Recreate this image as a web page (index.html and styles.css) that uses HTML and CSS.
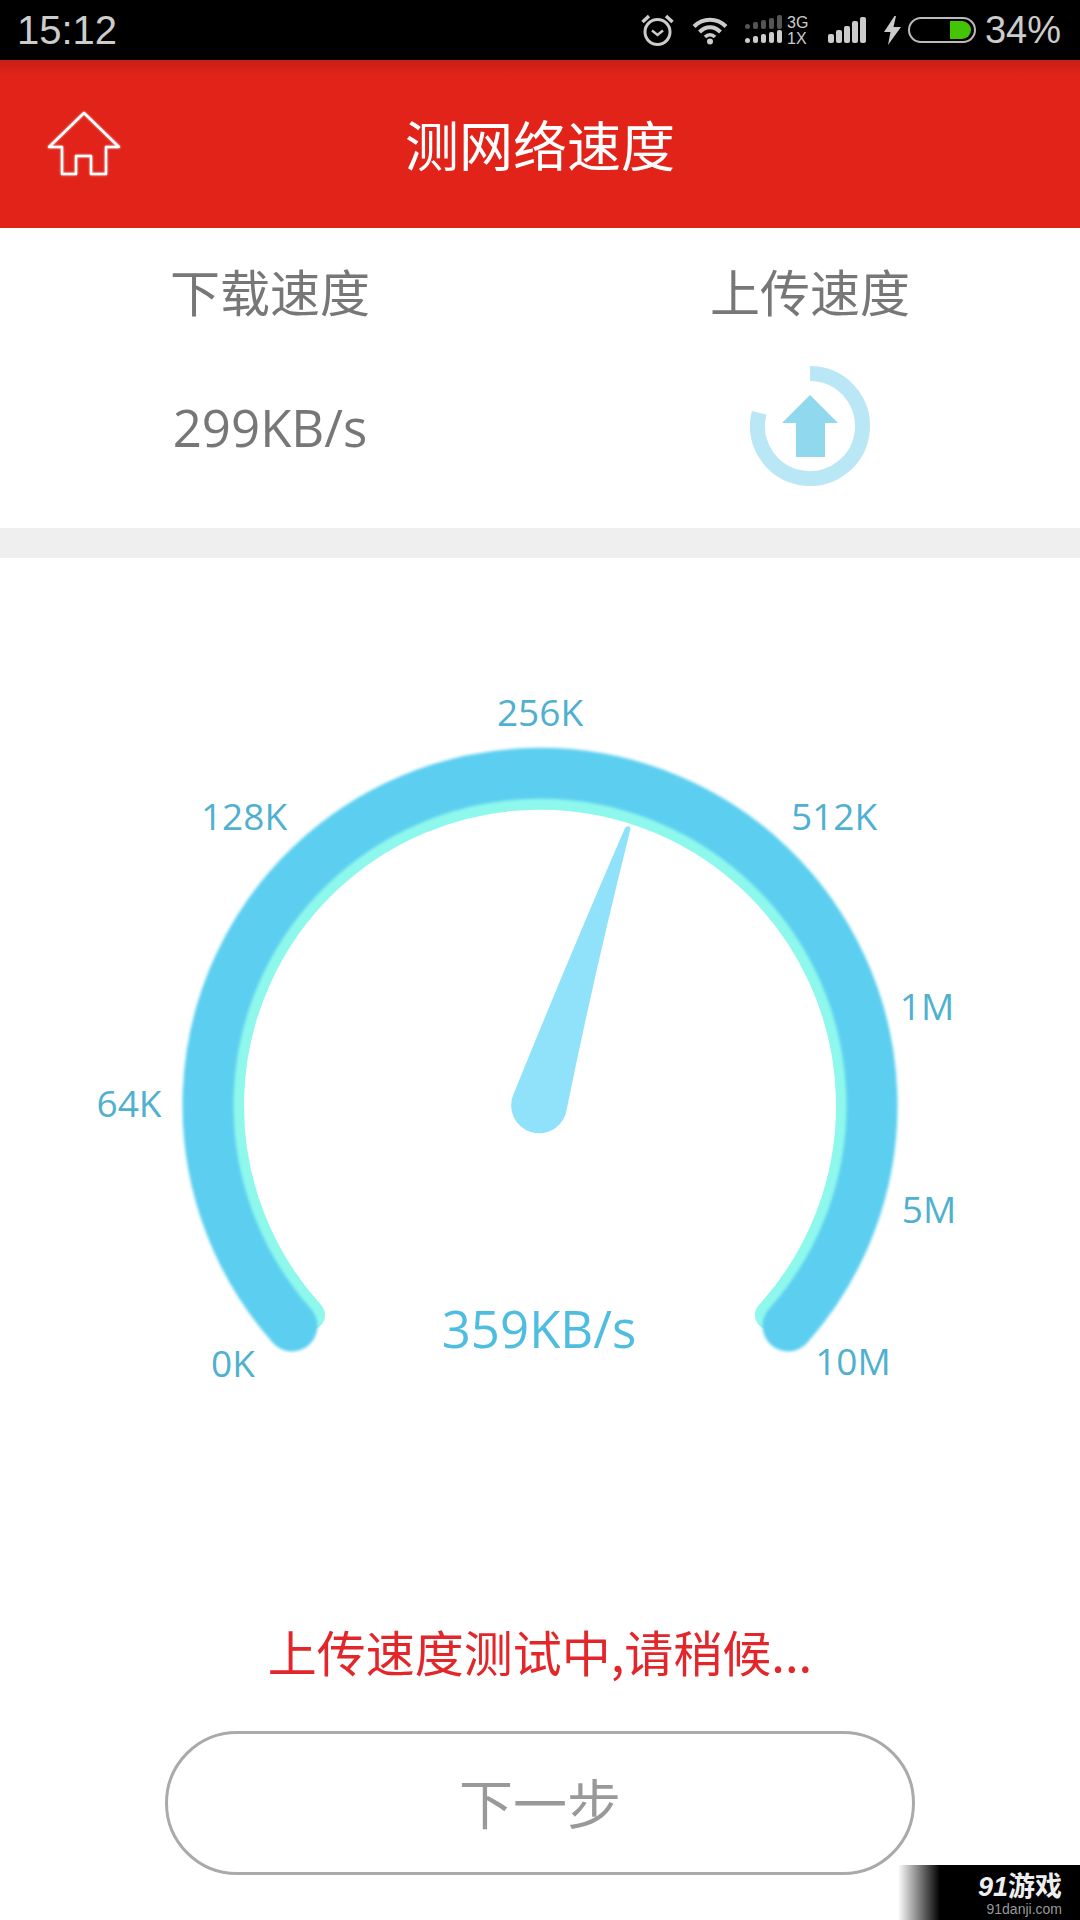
FILE: index.html
```html
<!DOCTYPE html>
<html lang="zh-CN">
<head>
  <meta charset="UTF-8">
  <meta name="viewport" content="width=device-width, initial-scale=1.0">
  <title>测网络速度</title>
  <link rel="stylesheet" href="styles.css">
</head>
<body>

  <div class="statusbar">
    <span class="clock">15:12</span>
    <div class="status-icons">
      <svg class="ico-alarm" width="33" height="34" viewBox="0 0 33 34">
        <circle cx="16.500" cy="19" r="12.500" fill="none" stroke="#ccc" stroke-width="3"/>
        <path d="M11 17.500l5.500 4.500 5.500-4.500" fill="none" stroke="#ccc" stroke-width="2.500"/>
        <path d="M1.500 9L8 3M31.500 9L25 3" stroke="#ccc" stroke-width="3.500"/>
      </svg>
      <svg class="ico-wifi" width="36" height="30" viewBox="0 0 36 30">
        <path d="M2 11.500C11 2.500 25 2.500 34 11.500" fill="none" stroke="#ccc" stroke-width="4"/>
        <path d="M7.500 17C14 10.500 22 10.500 28.500 17" fill="none" stroke="#ccc" stroke-width="4"/>
        <path d="M13 22c3-3 7-3 10 0" fill="none" stroke="#ccc" stroke-width="3.500"/>
        <circle cx="18" cy="26.500" r="3" fill="#ccc"/>
      </svg>
      <svg class="ico-dual" width="66" height="34" viewBox="0 -2 66 34">
        <g fill="#555">
          <rect x="0" y="9" width="5" height="5" rx="2.500"/>
          <rect x="8" y="7" width="5" height="7" rx="2"/>
          <rect x="16" y="5" width="5" height="9" rx="2"/>
          <rect x="24" y="3" width="5" height="11" rx="2"/>
          <rect x="32" y="0" width="5" height="14" rx="2"/>
        </g>
        <g fill="#ccc">
          <rect x="0" y="23" width="5" height="5" rx="2.500"/>
          <rect x="8" y="21" width="5" height="7" rx="2"/>
          <rect x="16" y="19" width="5" height="9" rx="2"/>
          <rect x="24" y="17" width="5" height="11" rx="2"/>
          <rect x="32" y="15" width="5" height="13" rx="2"/>
        </g>
        <text class="net-type" x="42" y="12.500">3G</text>
        <text class="net-type" x="42" y="28.500">1X</text>
      </svg>
      <svg class="ico-signal" width="38" height="27" viewBox="0 0 38 27">
        <rect x="0" y="17" width="6" height="9" rx="2" fill="#ccc"/>
        <rect x="8" y="13" width="6" height="13" rx="2" fill="#ccc"/>
        <rect x="16" y="9" width="6" height="17" rx="2" fill="#ccc"/>
        <rect x="24" y="4" width="6" height="22" rx="2" fill="#ccc"/>
        <rect x="32" y="0" width="6" height="26" rx="2" fill="#ccc"/>
      </svg>
      <svg class="ico-bolt" width="17" height="29" viewBox="0 0 17 29">
        <path d="M10.500 0L0 16h6.500L4 29 17 11h-7.500L12 0z" fill="#ccc"/>
      </svg>
      <div class="battery"><div class="battery-level"></div></div>
      <span class="battery-text">34%</span>
    </div>
  </div>

  <div class="header">
    <svg class="home" width="80" height="72" viewBox="0 0 80 72">
      <path d="M38 3L73 37H60V64H45V46H30V64H16V37H3z" fill="none" stroke="#fff" stroke-width="2.500" stroke-linejoin="round"/>
    </svg>
    <h1 class="title">测网络速度</h1>
  </div>

  <div class="stats">
    <div class="stat">
      <div class="stat-name">下载速度</div>
      <div class="stat-val">299KB/s</div>
    </div>
    <div class="stat">
      <div class="stat-name">上传速度</div>
      <svg class="stat-ico" width="120" height="120" viewBox="0 0 120 120">
        <path d="M60 7.500A52.500 52.500 0 1 1 9.200 46.800" fill="none" stroke="#b9e7f5" stroke-width="15"/>
        <path d="M60 29L88 57H75V91H46V57H32z" fill="#8fd8ee"/>
      </svg>
    </div>
  </div>

  <div class="divider"></div>

  <div class="gauge">
    <!-- 坐标直接用整页的像素，所以 viewBox 从 558 开始 -->
    <svg class="gauge-svg" width="1080" height="1040" viewBox="0 558 1080 1040">
      <defs>
        <filter id="soft" x="-5%" y="-5%" width="110%" height="110%">
          <feGaussianBlur stdDeviation="1.500"/>
        </filter>
      </defs>
      <path d="M310 1315A311 311 0 1 1 770 1315" fill="none" stroke="#8ff8ec" stroke-width="30" stroke-linecap="round"/>
      <path d="M292 1326A332 332 0 1 1 788 1326" fill="none" stroke="#5ccff0" stroke-width="51" stroke-linecap="round" filter="url(#soft)"/>
      <path d="M625 828Q627 825 630 827Q631 828 630 831Q594 975 567 1108A28 28 0 1 1 514 1093Q572 950 625 828z" fill="#8fe2fa"/>

      <text class="tick" x="540" y="726">256K</text>
      <text class="tick" x="244" y="830">128K</text>
      <text class="tick" x="834" y="830">512K</text>
      <text class="tick" x="129" y="1117">64K</text>
      <text class="tick" x="927" y="1020">1M</text>
      <text class="tick" x="929" y="1223">5M</text>
      <text class="tick" x="233" y="1377">0K</text>
      <text class="tick" x="853" y="1375">10M</text>
      <text class="speed" x="539" y="1348">359KB/s</text>
    </svg>
  </div>

  <div class="msg">上传速度测试中,请稍候...</div>

  <div class="btn">下一步</div>

  <div class="mark">
    <div class="mark-logo"><i class="mark-num">91</i>游戏</div>
    <div class="mark-url">91danji.com</div>
  </div>

</body>
</html>
```

FILE: styles.css
```css
* {
  margin: 0;
  padding: 0;
  box-sizing: border-box;
}

html, body {
  width: 1080px;
  height: 1920px;
  overflow: hidden;
  background-color: #fff;
}

body {
  position: relative;
  font-family: "Open Sans", "Noto Sans CJK SC", sans-serif;
}

.statusbar {
  display: flex;
  justify-content: space-between;
  align-items: center;
  height: 60px;
  padding: 0 19px 0 17px;
  background-color: #000;
  color: #ccc;
  font-family: "Liberation Sans", sans-serif;
}

.clock {
  font-size: 40px;
}

.status-icons {
  display: flex;
  align-items: center;
}

.status-icons svg {
  flex: none;
}

.ico-alarm {
  margin-right: 18px;
}

.ico-wifi {
  margin-right: 17px;
}

.ico-dual {
  margin-right: 17px;
}

.ico-signal {
  margin-right: 18px;
}

.ico-bolt {
  margin-right: 7px;
}

.net-type {
  font-family: "Liberation Sans", sans-serif;
  font-size: 16px;
  fill: #ccc;
}

.battery {
  display: flex;
  justify-content: flex-end;
  align-items: center;
  width: 68px;
  height: 26px;
  margin-right: 9px;
  padding-right: 3px;
  border: 2px solid #bbb;
  border-radius: 13px;
}

.battery-level {
  width: 21px;
  height: 18px;
  background-color: #44c404;
  border-radius: 0 9px 9px 0;
}

.battery-text {
  font-size: 38px;
}

.header {
  position: relative;
  display: flex;
  justify-content: center;
  align-items: center;
  height: 168px;
  padding-bottom: 2px;
  background: linear-gradient(#c61f17, #e2231a 16px);
}

.home {
  position: absolute;
  left: 46px;
  top: 50px;
  filter: drop-shadow(0 0 1px rgba(255, 255, 255, 0.7));
}

.title {
  color: #fff;
  font-size: 54px;
  font-weight: 400;
  font-family: "Noto Sans CJK SC", sans-serif;
}

.stats {
  display: grid;
  grid-template-columns: 1fr 1fr;
  height: 300px;
  color: #777;
}

.stat {
  display: flex;
  flex-direction: column;
  align-items: center;
}

.stat-name {
  height: 132px;
  padding-top: 26px;
  font-size: 50px;
  line-height: 72px;
  font-family: "Noto Sans CJK SC", sans-serif;
}

.stat-val {
  margin-top: 33px;
  font-size: 51px;
  line-height: 68px;
}

.stat-ico {
  margin-top: 6px;
}

.divider {
  height: 30px;
  background-color: #efefef;
}

.gauge {
  height: 1040px;
}

.gauge-svg {
  display: block;
}

.tick {
  font-size: 37px;
  fill: #4fb0cf;
  text-anchor: middle;
}

.speed {
  font-size: 51px;
  fill: #4fbde0;
  text-anchor: middle;
}

.msg {
  height: 133px;
  padding-top: 18px;
  color: #e2262a;
  font-size: 49px;
  line-height: 70px;
  text-align: center;
  font-family: "Noto Sans CJK SC", sans-serif;
}

.btn {
  width: 750px;
  height: 144px;
  margin: 0 auto;
  border: 3px solid #aaa;
  border-radius: 72px;
  color: #999;
  font-size: 54px;
  line-height: 136px;
  text-align: center;
  font-family: "Noto Sans CJK SC", sans-serif;
}

.mark {
  position: absolute;
  right: 0;
  bottom: 0;
  width: 182px;
  height: 55px;
  padding: 6px 18px 0 0;
  background: linear-gradient(90deg, #fff, #000 42px);
  text-align: right;
}

.mark-logo {
  color: #eee;
  font-size: 27px;
  font-weight: 700;
  line-height: 27px;
  font-family: "Noto Sans CJK SC", sans-serif;
}

.mark-num {
  font-family: "Liberation Sans", sans-serif;
  font-style: italic;
  font-weight: 700;
}

.mark-url {
  margin-top: 1px;
  color: #999;
  font-size: 14px;
  line-height: 15px;
  font-family: "Liberation Sans", sans-serif;
}
```
